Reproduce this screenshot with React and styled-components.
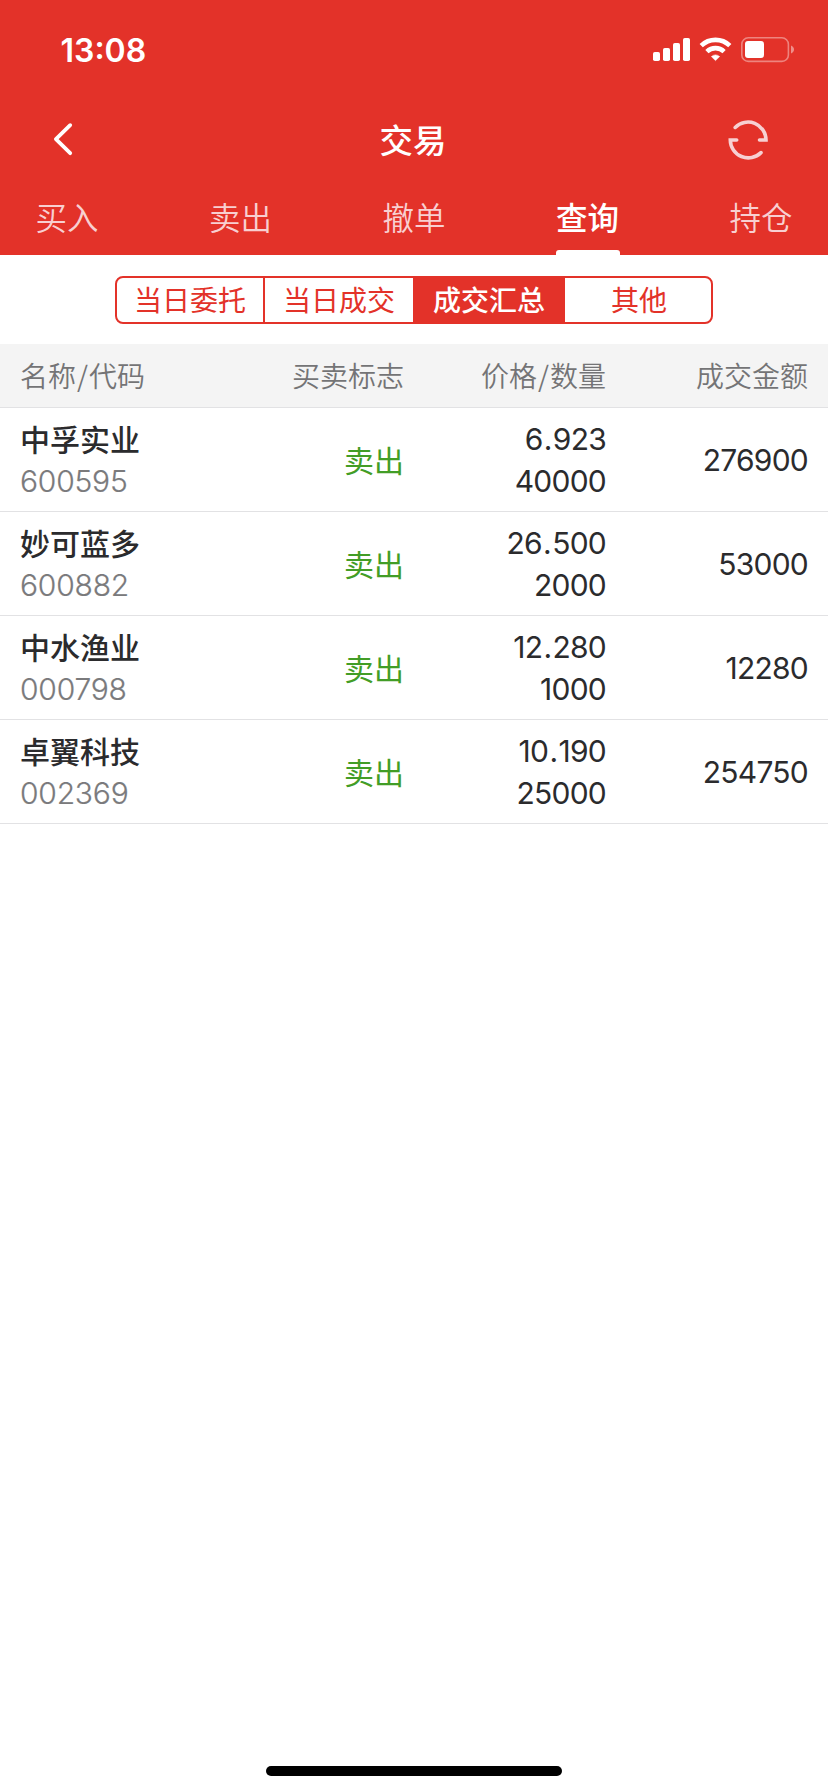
import React from 'react'
import styled, { createGlobalStyle } from 'styled-components'

const tabs = ['买入', '卖出', '撤单', '查询', '持仓']
const filters = ['当日委托', '当日成交', '成交汇总', '其他']

const deals = [
    { name: '中孚实业', code: '600595', side: '卖出', price: '6.923', count: '40000', amount: '276900' },
    { name: '妙可蓝多', code: '600882', side: '卖出', price: '26.500', count: '2000', amount: '53000' },
    { name: '中水渔业', code: '000798', side: '卖出', price: '12.280', count: '1000', amount: '12280' },
    { name: '卓翼科技', code: '002369', side: '卖出', price: '10.190', count: '25000', amount: '254750' },
]

const StatusIcons = () => (
    <svg width="142" height="26" viewBox="653 37 142 26" fill="none">
        <g fill="#fff">
            <rect x="653" y="52" width="7" height="9" rx="1.8" />
            <rect x="663" y="48" width="7" height="13" rx="1.8" />
            <rect x="673" y="43" width="7" height="18" rx="1.8" />
            <rect x="683" y="38" width="7" height="23" rx="1.8" />
            <path d="M715.5 60.6l-4.1-4q4.1-3.4 8.2 0z" stroke="#fff" strokeWidth="0.6" strokeLinejoin="round" />
            <rect x="745" y="41" width="19" height="17" rx="3" />
        </g>
        <g stroke="#fff" strokeWidth="4.6">
            <path d="M701.2 45.6a20.6 20.6 0 0 1 28.6 0" />
            <path d="M706.9 51.6a12.4 12.4 0 0 1 17.2 0" />
        </g>
        <rect x="741.8" y="37.8" width="46.6" height="23.6" rx="6.5" stroke="#fff" strokeOpacity="0.4" strokeWidth="1.6" />
        <path d="M791 45.5c4 1.6 4 6.4 0 8z" fill="#fff" fillOpacity="0.45" />
    </svg>
)

const Price = ({ value }) => {
    const [whole, decimals] = value.split('.')

    return <Num>{whole}<Dot>.</Dot>{decimals}</Num>
}

const App = () => {
    return (
        <Screen>
            <GlobalStyle />
            <Header>
                <StatusBar>
                    <Time>13:08</Time>
                    <StatusIcons />
                </StatusBar>
                <NavBar>
                    <svg width="22" height="36" viewBox="52 122 22 36" fill="none">
                        <path d="M70.2 125.2L55.9 139.2L70.2 153.2" stroke="#fff" strokeWidth="3.8" strokeLinecap="round" strokeLinejoin="round" />
                    </svg>
                    <Title>交易</Title>
                    <svg width="42" height="42" viewBox="727 119 42 42" fill="none">
                        <path
                            d="M735.2 127.4A18 18 0 0 1 766 140H759.5M761 152.6A18 18 0 0 1 730.3 140H736.7"
                            stroke="#f7d0d2"
                            strokeWidth="3.6"
                            strokeLinecap="round"
                        />
                    </svg>
                </NavBar>
                <Tabs>
                    {tabs.map((tab) => (
                        <Tab key={tab} $active={tab === '查询'}>{tab}</Tab>
                    ))}
                </Tabs>
            </Header>
            <Filters>
                {filters.map((filter) => (
                    <Filter key={filter} $active={filter === '成交汇总'}>{filter}</Filter>
                ))}
            </Filters>
            <TableHead>
                <span>名称<Slash>/</Slash>代码</span>
                <span>买卖标志</span>
                <span>价格<Slash>/</Slash>数量</span>
                <span>成交金额</span>
            </TableHead>
            {deals.map((deal) => (
                <Row key={deal.code}>
                    <div>
                        <Name>{deal.name}</Name>
                        <Code>{deal.code}</Code>
                    </div>
                    <Side>{deal.side}</Side>
                    <div>
                        <Price value={deal.price} />
                        <Num>{deal.count}</Num>
                    </div>
                    <Num>{deal.amount}</Num>
                </Row>
            ))}
            <HomeBar />
        </Screen>
    )
}

export default App


const GlobalStyle = createGlobalStyle`
* {
    box-sizing: border-box;
}
body {
    margin: 0;
    background: #fff;
}
svg {
    display: block;
}
`

const Screen = styled.div`
width: 828px;
height: 1792px;
background: #fff;
display: flex;
flex-direction: column;
font-family: 'Noto Sans CJK SC', sans-serif;
color: #2b2b2d;
overflow: hidden;
`

const Header = styled.header`
height: 255px;
background: #e33229;
color: #fff;
`

const StatusBar = styled.div`
height: 100px;
padding: 0 33px 0 60.5px;
display: flex;
justify-content: space-between;
align-items: center;
`

const Time = styled.div`
padding-top: 1px;
font-family: Inter, sans-serif;
font-weight: 600;
font-size: 32px;
line-height: 40px;
`

const NavBar = styled.div`
height: 80px;
padding: 0 59px 0 52px;
display: grid;
grid-template-columns: 100px 1fr 42px;
align-items: center;
`

const Title = styled.h1`
margin: 0;
padding: 0 53px 2px 0;
font-size: 33.5px;
line-height: 48px;
font-weight: 500;
text-align: center;
`

const Tabs = styled.nav`
height: 75px;
padding: 0 35px;
display: flex;
justify-content: space-between;
`

const Tab = styled.div`
width: 64px;
height: 75px;
display: flex;
flex-direction: column;
justify-content: space-between;
align-items: center;
font-size: 31.5px;
line-height: 73px;
white-space: nowrap;
font-weight: ${(props) => (props.$active ? 500 : 350)};
color: ${(props) => (props.$active ? '#fff' : '#f8cfd1')};

&::after {
    content: '';
    flex: none;
    width: 64px;
    height: 5px;
    margin-top: -5px;
    border-radius: 3px 3px 0 0;
    background: ${(props) => (props.$active ? '#fff' : 'transparent')};
}
`

const Filters = styled.div`
height: 89px;
padding: 21px 115px 20px;
display: flex;
`

const Filter = styled.div`
width: 152px;
height: 48px;
border: 2px solid #e33229;
font-size: 28px;
line-height: 42px;
text-align: center;
font-weight: ${(props) => (props.$active ? 500 : 400)};
color: ${(props) => (props.$active ? '#fff' : '#e33229')};
background: ${(props) => (props.$active ? '#e33229' : '#fff')};

& + & {
    margin-left: -2px;
}
&:first-child {
    width: 150px;
    border-radius: 8px 0 0 8px;
}
&:last-child {
    width: 150px;
    padding-left: 2px;
    border-radius: 0 8px 8px 0;
}
`

const Line = styled.div`
padding: 0 20px;
display: grid;
grid-template-columns: 183px 201px 202px 202px;
align-items: center;
text-align: right;
border-bottom: 1px solid #e2e2e4;

& > :first-child {
    text-align: left;
}
`

const TableHead = styled(Line)`
height: 64px;
padding-bottom: 2px;
background: #f4f4f4;
color: #747476;
font-size: 28px;
line-height: 60px;
font-weight: 350;
white-space: nowrap;
`

const Slash = styled.span`
padding: 0 1px;
`

const Row = styled(Line)`
height: 104px;
`

const Name = styled.div`
height: 42px;
font-size: 30px;
line-height: 40px;
font-weight: 500;
`

const Num = styled.div`
font-family: Inter, sans-serif;
font-size: 30px;
line-height: 42px;
font-weight: 400;
letter-spacing: -0.75px;
`

const Dot = styled.span`
padding: 0 1.2px;
`

const Code = styled(Num)`
color: #7a7a7c;
font-weight: 300;
letter-spacing: -0.2px;
-webkit-text-stroke: 0.2px #7a7a7c;
`

const Side = styled.div`
padding-bottom: 2px;
font-size: 30px;
line-height: 40px;
color: #429d26;
`

const HomeBar = styled.div`
width: 296px;
height: 10px;
margin: auto auto 16px;
border-radius: 5px;
background: #000;
`
